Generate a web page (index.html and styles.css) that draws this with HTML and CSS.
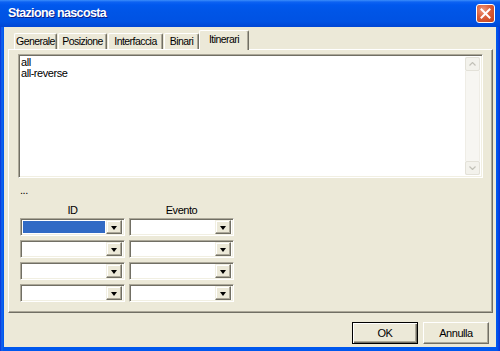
FILE: index.html
```html
<!DOCTYPE html>
<html lang="it">
<head>
<meta charset="utf-8">
<title>Stazione nascosta</title>
<link rel="stylesheet" href="styles.css">
</head>
<body>
<div class="window">
  <div class="titlebar">
    <span class="title">Stazione nascosta</span>
    <span class="close">
      <svg width="11" height="11" viewBox="0 0 11 11"><path d="M1.5 1.5 L9.5 9.5 M9.5 1.5 L1.5 9.5" stroke="#fff" stroke-width="2" stroke-linecap="square"/></svg>
    </span>
  </div>
  <div class="frame">
    <div class="client">
      <div class="tabs">
        <span class="tab">Generale</span>
        <span class="tab">Posizione</span>
        <span class="tab">Interfaccia</span>
        <span class="tab">Binari</span>
        <span class="tab active">Itinerari</span>
      </div>
      <div class="panel">
        <div class="listbox">
          <div class="items">
            <div>all</div>
            <div>all-reverse</div>
          </div>
          <div class="scrollbar">
            <span class="sbtn"><svg width="7" height="4" viewBox="0 0 7 4"><path d="M0.5 3.5 L3.5 0.5 L6.5 3.5" fill="none" stroke="#C2C1B8" stroke-width="1.2"/></svg></span>
            <span class="track"></span>
            <span class="sbtn"><svg width="7" height="4" viewBox="0 0 7 4"><path d="M0.5 0.5 L3.5 3.5 L6.5 0.5" fill="none" stroke="#C2C1B8" stroke-width="1.2"/></svg></span>
          </div>
        </div>
        <div class="dots">...</div>
        <div class="heads">
          <span class="head">ID</span>
          <span class="head">Evento</span>
        </div>
        <div class="grid">
          <div class="combo"><span class="field selected"></span><span class="drop"><i></i></span></div>
          <div class="combo"><span class="field"></span><span class="drop"><i></i></span></div>
          <div class="combo"><span class="field"></span><span class="drop"><i></i></span></div>
          <div class="combo"><span class="field"></span><span class="drop"><i></i></span></div>
          <div class="combo"><span class="field"></span><span class="drop"><i></i></span></div>
          <div class="combo"><span class="field"></span><span class="drop"><i></i></span></div>
          <div class="combo"><span class="field"></span><span class="drop"><i></i></span></div>
          <div class="combo"><span class="field"></span><span class="drop"><i></i></span></div>
        </div>
      </div>
      <div class="footer">
        <button class="btn default">OK</button>
        <button class="btn">Annulla</button>
      </div>
    </div>
  </div>
</div>
</body>
</html>
```

FILE: styles.css
```css
* { box-sizing: border-box; }
html, body { margin: 0; padding: 0; background: #fff; }
body {
  font-family: "Liberation Sans", Arial, sans-serif;
  font-size: 11px;
  letter-spacing: -0.45px;
  color: #000;
}
.window {
  width: 500px;
  height: 351px;
  display: flex;
  flex-direction: column;
  background: #0054E3;
}
.titlebar {
  height: 27px;
  flex: none;
  display: flex;
  align-items: center;
  justify-content: space-between;
  padding: 0 5px 1px 8px;
  background: linear-gradient(#3B8DFB 0, #0D62F2 2px, #0058EE 5px, #0055E6 45%, #0052E3 80%, #0046D4 100%);
}
.title {
  color: #fff;
  font-weight: bold;
  font-size: 12.5px;
  letter-spacing: -0.65px;
  text-shadow: 1px 1px 0 #0A1E8A;
}
.close {
  width: 19px;
  height: 19px;
  margin-top: 1px;
  border: 1px solid #fff;
  border-radius: 3px;
  background: radial-gradient(circle at 35% 30%, #EE9A7E 0, #DA5E39 45%, #C3421B 100%);
  display: flex;
  align-items: center;
  justify-content: center;
}
.frame {
  flex: 1;
  display: flex;
  padding: 0 4px 4px 4px;
  background: linear-gradient(90deg, #0831D9 0, #166AEE 2px, #0058EE 3px, #0058EE calc(100% - 3px), #0831D9 100%);
}
.client {
  flex: 1;
  display: flex;
  flex-direction: column;
  background: #ECE9D8;
  padding: 3px 3px 0 4px;
}
.tabs {
  height: 19px;
  display: flex;
  align-items: flex-end;
  padding-left: 6px;
  position: relative;
  z-index: 1;
}
.tab {
  flex: none;
  height: 16px;
  line-height: 14px;
  text-align: center;
  font-size: 10.5px;
  letter-spacing: -0.55px;
  white-space: nowrap;
  overflow: hidden;
  margin-right: 1px;
  background: #ECE9D8;
  border-left: 1px solid #fff;
  border-top: 1px solid #fff;
  border-right: 1px solid #716F64;
  box-shadow: inset -1px 0 0 #ACA899;
  border-radius: 2px 2px 0 0;
}
.tab:nth-child(1) { width: 43px; }
.tab:nth-child(2) { width: 49px; }
.tab:nth-child(3) { width: 55px; }
.tab:nth-child(4) { width: 35px; margin-right: 0; }
.tab.active {
  width: 50px;
  height: 20px;
  margin: 0 0 -1px 0;
  line-height: 17px;
}
.panel {
  height: 264px;
  flex: none;
  border: 1px solid;
  border-color: #fff #716F64 #716F64 #fff;
  box-shadow: inset -1px -1px 0 #ACA899;
  padding: 4px 9px 0 9px;
}
.listbox {
  height: 124px;
  display: flex;
  background: #fff;
  border: 1px solid;
  border-color: #ACA899 #fff #fff #ACA899;
  box-shadow: inset 1px 1px 0 #716F64, inset -1px -1px 0 #F1EFE2;
  padding: 2px 2px 2px 2px;
}
.items {
  flex: 1;
  line-height: 11px;
}
.scrollbar {
  width: 15px;
  display: flex;
  flex-direction: column;
  background: #F7F6F2;
}
.sbtn {
  height: 14px;
  flex: none;
  border: 1px solid #E3E1D8;
  border-radius: 2px;
  background: #F3F2EC;
  display: flex;
  align-items: center;
  justify-content: center;
}
.track {
  flex: 1;
  border-left: 1px solid #EFEDE6;
  border-right: 1px solid #EFEDE6;
}
.dots {
  margin: 6px 0 0 2px;
  line-height: 13px;
}
.heads {
  display: flex;
  gap: 4px;
  margin: 7px 0 0 2px;
  height: 14px;
}
.head {
  width: 105px;
  text-align: center;
  line-height: 13px;
}
.grid {
  display: grid;
  grid-template-columns: 105px 105px;
  grid-auto-rows: 18px;
  row-gap: 4px;
  column-gap: 4px;
  margin: 0 0 0 2px;
}
.combo {
  display: flex;
  align-items: center;
  background: #fff;
  border: 1px solid;
  border-color: #ACA899 #fff #fff #ACA899;
  box-shadow: inset 1px 1px 0 #716F64, inset -1px -1px 0 #F1EFE2;
  padding: 2px 2px 2px 2px;
}
.field {
  flex: 1;
  height: 100%;
}
.field.selected {
  background: #316AC5;
  margin-right: 1px;
}
.drop {
  width: 16px;
  height: 14px;
  flex: none;
  background: #ECE9D8;
  border: 1px solid;
  border-color: #F1EFE2 #716F64 #716F64 #F1EFE2;
  box-shadow: inset -1px -1px 0 #ACA899, inset 1px 1px 0 #fff;
  display: flex;
  align-items: center;
  justify-content: center;
}
.drop i {
  width: 0;
  height: 0;
  border-left: 3.5px solid transparent;
  border-right: 3.5px solid transparent;
  border-top: 4px solid #000;
  margin-top: 1px;
}
.footer {
  display: flex;
  justify-content: flex-end;
  gap: 5px;
  padding: 9px 4px 0 0;
}
.btn {
  width: 66px;
  height: 22px;
  font-family: inherit;
  font-size: 11px;
  letter-spacing: -0.45px;
  color: #000;
  background: #ECE9D8;
  border: 1px solid;
  border-color: #fff #716F64 #716F64 #fff;
  box-shadow: inset -1px -1px 0 #ACA899;
  padding: 0;
}
.btn.default {
  border: 1px solid #000;
  box-shadow: inset 1px 1px 0 #fff, inset -1px -1px 0 #716F64, inset -2px -2px 0 #ACA899;
}
```
